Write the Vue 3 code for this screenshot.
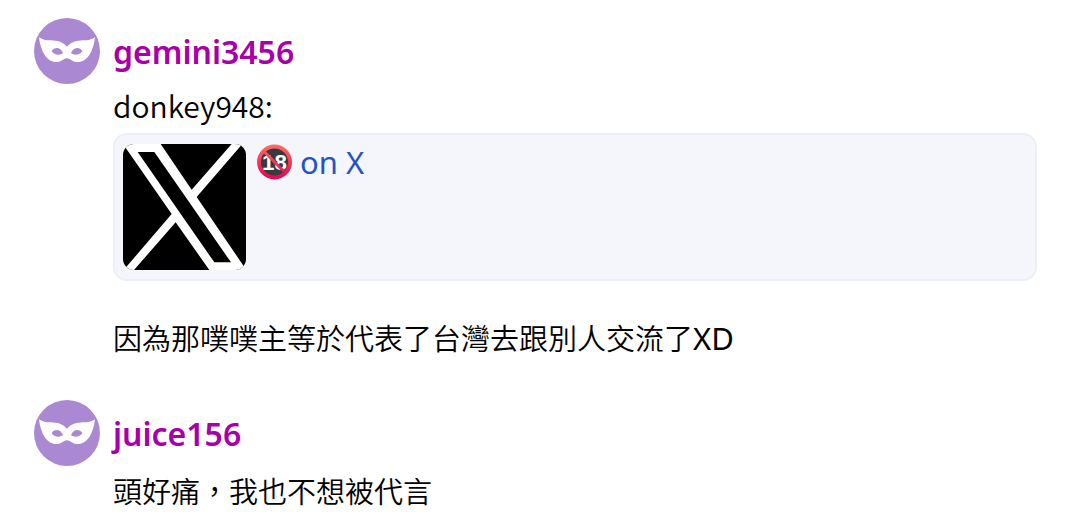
<script setup>
const posts = [
  {
    id: 1,
    author: 'gemini3456',
    mention: 'donkey948:',
    link: 'on X',
    text: '因為那噗噗主等於代表了台灣去跟別人交流了',
    suffix: 'XD',
  },
  { id: 2, author: 'juice156', text: '頭好痛，我也不想被代言' },
]
</script>

<template>
  <main class="thread">
    <article v-for="post in posts" :key="post.id" class="post">
      <svg class="avatar" viewBox="18 18 198 198" aria-hidden="true">
        <circle cx="117" cy="117" r="99" fill="#aa89d2" />
        <path
          fill="#fff"
          fill-rule="evenodd"
          d="M33 76C50 88 66 84 82 86C100 88 110 95 117 104C124 95 134 88 152 86C168 84 184 88 201 76C199 96 193 115 184 129C173 145 159 151 146 150C131 149 127 139 117 139C107 139 103 149 88 150C75 151 61 145 50 129C41 115 35 96 33 76ZM71 117C79 104 99 105 105 124C95 131 78 130 71 117ZM163 117C155 104 135 105 129 124C139 131 156 130 163 117Z"
        />
      </svg>
      <div class="body">
        <a class="author" href="#">{{ post.author }}</a>
        <p v-if="post.mention" class="mention">{{ post.mention }}</p>
        <a v-if="post.link" class="card" href="#">
          <svg class="thumb" viewBox="39 48 369 378" preserveAspectRatio="none" aria-hidden="true">
            <path fill="#000" d="M39 48H408V426H39Z" />
            <path
              fill="#fff"
              fill-rule="evenodd"
              d="M39 48H152L245 185L365 48H397L260 207L409 426H298L197 283L72 426H41L185 258ZM83 72L313 403H363L133 72Z"
            />
          </svg>
          <span class="title">
            <svg class="emoji" viewBox="0 0 36 36" role="img" aria-label="No one under eighteen">
              <defs>
                <linearGradient id="ring" gradientUnits="userSpaceOnUse" x1="0" y1="0" x2="0" y2="36">
                  <stop offset="0" stop-color="#ff6f66" />
                  <stop offset="1" stop-color="#e8004f" />
                </linearGradient>
              </defs>
              <circle cx="18" cy="18" r="15" fill="#3a3a3c" />
              <text class="age" x="18" y="26" text-anchor="middle">18</text>
              <circle cx="18" cy="18" r="16" fill="none" stroke="url(#ring)" stroke-width="4" />
              <path d="M7 7L29 29" stroke="url(#ring)" stroke-width="3" />
            </svg>
            <span>{{ post.link }}</span>
          </span>
        </a>
        <p class="text">{{ post.text }}<span v-if="post.suffix" class="latin">{{ post.suffix }}</span></p>
      </div>
    </article>
  </main>
</template>

<style>
body {
  margin: 0;
  background: #fff;
}
</style>

<style scoped>
.thread {
  display: flex;
  flex-direction: column;
  gap: 41px;
  padding: 18px 43px 0 34px;
  font-family: "Noto Sans CJK TC", sans-serif;
  font-size: 29px;
  font-weight: 350;
  line-height: 44px;
  color: #000;
}

.post {
  display: flex;
  align-items: flex-start;
  gap: 13px;
}

.avatar {
  flex: none;
  width: 66px;
  height: 66px;
}

.body {
  flex: 1;
  min-width: 0;
  padding-top: 12px;
}

.author {
  display: block;
  margin-bottom: 12px;
  font-family: "Noto Sans", sans-serif;
  font-size: 32px;
  font-weight: 600;
  color: #a800a8;
  text-decoration: none;
}

.text {
  margin: 0;
}

.mention {
  margin: 0;
  font-size: 30px;
  line-height: 38px;
}

.latin {
  font-family: "Noto Sans", sans-serif;
  font-size: 31px;
  font-weight: 400;
  line-height: 36px;
}

.card {
  display: flex;
  align-items: flex-start;
  gap: 11px;
  margin: 9px 0 34px;
  padding: 9px 8px;
  border: 2px solid #eceff9;
  border-radius: 14px;
  background: #f4f6fc;
  color: #2454c4;
  text-decoration: none;
}

.thumb {
  flex: none;
  width: 123px;
  height: 126px;
  border-radius: 11px;
}

.title {
  display: flex;
  align-items: center;
  gap: 8px;
  font-family: "Noto Sans", sans-serif;
  font-size: 31px;
  font-weight: 400;
  line-height: 36px;
}

.emoji {
  width: 35px;
  height: 36px;
}

.age {
  fill: #fff;
  font-family: "Liberation Sans", sans-serif;
  font-size: 23px;
  font-weight: 700;
}
</style>
